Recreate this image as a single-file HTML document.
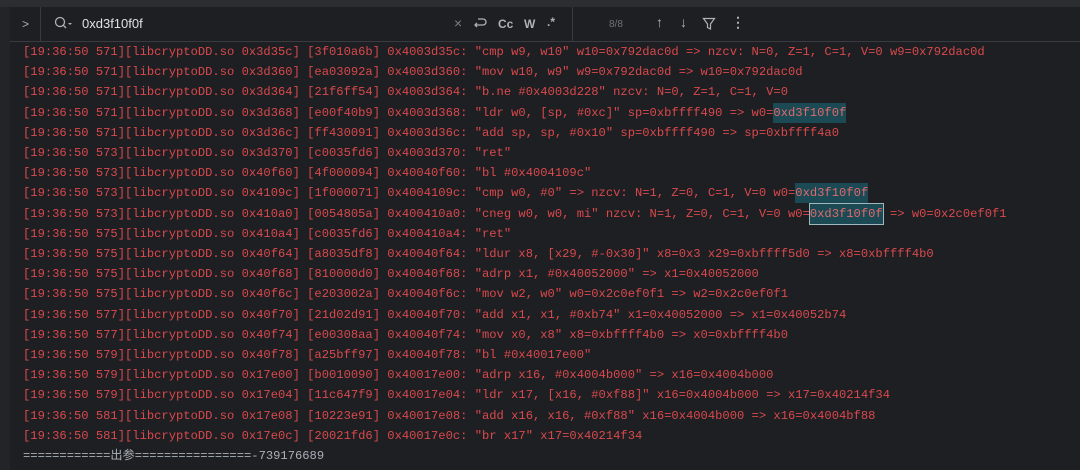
<!DOCTYPE html>
<html><head><meta charset="utf-8"><style>
*{margin:0;padding:0;box-sizing:border-box}
body{width:1080px;height:470px;background:#1e1f22;overflow:hidden;position:relative;font-family:"Liberation Sans",sans-serif}
.top{position:absolute;left:0;top:0;width:1080px;height:7px;background:#2b2d30}
.bar{position:absolute;left:10px;top:7px;width:1070px;height:35px;border-bottom:1px solid #393b40;background:#1e1f22}
.gut{position:absolute;left:0;top:7px;width:10px;height:463px;background:#232428}
.i{position:absolute;color:#afb1b3;font-size:13px;top:16px}
.log{position:absolute;left:23px;top:42px;font-family:"Liberation Mono",monospace;font-size:12.15px;line-height:20.2px;color:#d9494d;white-space:pre}
.h{background:#1b4a54;color:#e06a6d;padding:3px 0}
.b{outline:1px solid #9fb7bd;outline-offset:0}
.g{color:#a9b0b8;font-family:"Liberation Mono","Noto Sans CJK SC",monospace}
</style></head><body>
<div class="top"></div><div class="gut"></div>
<div class="bar"></div>
<div style="position:absolute;left:40px;top:7px;width:1px;height:35px;background:#393b40"></div>
<div style="position:absolute;left:572px;top:7px;width:1px;height:35px;background:#393b40"></div>
<div class="i" style="left:22px;font-size:12px;top:17px">&gt;</div>
<svg style="position:absolute;left:54px;top:16px" width="20" height="14"><circle cx="6" cy="6" r="4.5" fill="none" stroke="#afb1b3" stroke-width="1.3"/><path d="M9.5 9.5L12 12" stroke="#afb1b3" stroke-width="1.3"/><path d="M14 7l2 2 2-2" fill="#afb1b3"/></svg>
<div class="i" style="left:82px;color:#dfe1e5;font-size:13px">0xd3f10f0f</div>
<div class="i" style="left:454px;font-size:14px;top:15px;color:#7a7e85">×</div>
<svg style="position:absolute;left:472px;top:16px" width="16" height="14"><path d="M6 3h5a3 3 0 0 1 0 6H3M5 7L3 9l2 2" fill="none" stroke="#afb1b3" stroke-width="1.3"/></svg>
<div class="i" style="left:498px;font-weight:bold;font-size:12px;top:17px">Cc</div>
<div class="i" style="left:524px;font-weight:bold;font-size:12px;top:17px">W</div>
<div class="i" style="left:547px;font-weight:bold;font-size:12px;top:15px">.*</div>
<div class="i" style="left:609px;font-size:10px;color:#6f737a;top:19px">8/8</div>
<div class="i" style="left:656px;font-size:14px;top:14px">↑</div>
<div class="i" style="left:680px;font-size:14px;top:14px">↓</div>
<svg style="position:absolute;left:702px;top:17px" width="14" height="14"><path d="M1.5 1.5h11L8.5 7v5L5.5 10.5V7z" fill="none" stroke="#afb1b3" stroke-width="1.2"/></svg>
<div class="i" style="left:731px;font-size:14px;top:14px;font-weight:bold">⋮</div>
<div class="log">[19:36:50 571][libcryptoDD.so 0x3d35c] [3f010a6b] 0x4003d35c: "cmp w9, w10" w10=0x792dac0d => nzcv: N=0, Z=1, C=1, V=0 w9=0x792dac0d
[19:36:50 571][libcryptoDD.so 0x3d360] [ea03092a] 0x4003d360: "mov w10, w9" w9=0x792dac0d => w10=0x792dac0d
[19:36:50 571][libcryptoDD.so 0x3d364] [21f6ff54] 0x4003d364: "b.ne #0x4003d228" nzcv: N=0, Z=1, C=1, V=0
[19:36:50 571][libcryptoDD.so 0x3d368] [e00f40b9] 0x4003d368: "ldr w0, [sp, #0xc]" sp=0xbffff490 => w0=<span class="h">0xd3f10f0f</span>
[19:36:50 571][libcryptoDD.so 0x3d36c] [ff430091] 0x4003d36c: "add sp, sp, #0x10" sp=0xbffff490 => sp=0xbffff4a0
[19:36:50 573][libcryptoDD.so 0x3d370] [c0035fd6] 0x4003d370: "ret"
[19:36:50 573][libcryptoDD.so 0x40f60] [4f000094] 0x40040f60: "bl #0x4004109c"
[19:36:50 573][libcryptoDD.so 0x4109c] [1f000071] 0x4004109c: "cmp w0, #0" => nzcv: N=1, Z=0, C=1, V=0 w0=<span class="h">0xd3f10f0f</span>
[19:36:50 573][libcryptoDD.so 0x410a0] [0054805a] 0x400410a0: "cneg w0, w0, mi" nzcv: N=1, Z=0, C=1, V=0 w0=<span class="h b">0xd3f10f0f</span> => w0=0x2c0ef0f1
[19:36:50 575][libcryptoDD.so 0x410a4] [c0035fd6] 0x400410a4: "ret"
[19:36:50 575][libcryptoDD.so 0x40f64] [a8035df8] 0x40040f64: "ldur x8, [x29, #-0x30]" x8=0x3 x29=0xbffff5d0 => x8=0xbffff4b0
[19:36:50 575][libcryptoDD.so 0x40f68] [810000d0] 0x40040f68: "adrp x1, #0x40052000" => x1=0x40052000
[19:36:50 575][libcryptoDD.so 0x40f6c] [e203002a] 0x40040f6c: "mov w2, w0" w0=0x2c0ef0f1 => w2=0x2c0ef0f1
[19:36:50 577][libcryptoDD.so 0x40f70] [21d02d91] 0x40040f70: "add x1, x1, #0xb74" x1=0x40052000 => x1=0x40052b74
[19:36:50 577][libcryptoDD.so 0x40f74] [e00308aa] 0x40040f74: "mov x0, x8" x8=0xbffff4b0 => x0=0xbffff4b0
[19:36:50 579][libcryptoDD.so 0x40f78] [a25bff97] 0x40040f78: "bl #0x40017e00"
[19:36:50 579][libcryptoDD.so 0x17e00] [b0010090] 0x40017e00: "adrp x16, #0x4004b000" => x16=0x4004b000
[19:36:50 579][libcryptoDD.so 0x17e04] [11c647f9] 0x40017e04: "ldr x17, [x16, #0xf88]" x16=0x4004b000 => x17=0x40214f34
[19:36:50 581][libcryptoDD.so 0x17e08] [10223e91] 0x40017e08: "add x16, x16, #0xf88" x16=0x4004b000 => x16=0x4004bf88
[19:36:50 581][libcryptoDD.so 0x17e0c] [20021fd6] 0x40017e0c: "br x17" x17=0x40214f34
<span class="g">============出参================-739176689</span></div>
</body></html>
